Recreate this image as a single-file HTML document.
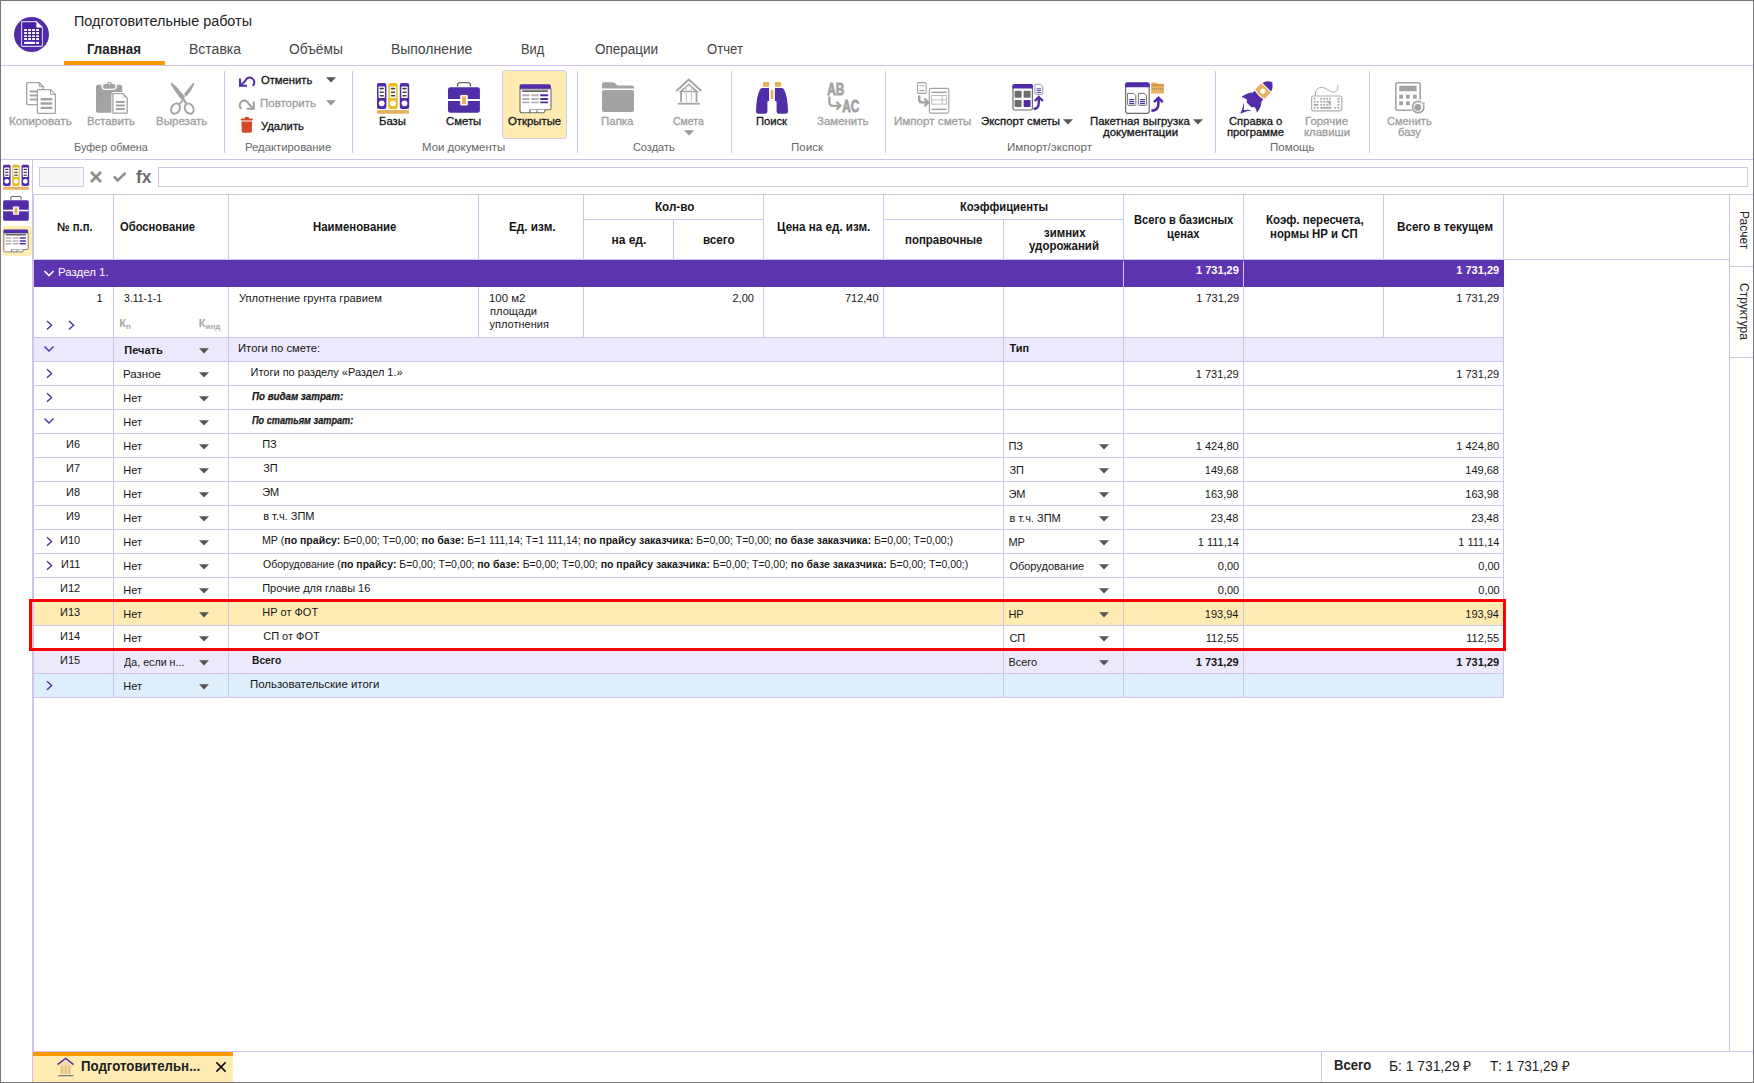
<!DOCTYPE html>
<html><head><meta charset="utf-8"><style>
html,body{margin:0;padding:0;width:1754px;height:1083px;overflow:hidden;background:#fff}
.t{position:absolute;white-space:nowrap;font-family:"Liberation Sans",sans-serif;line-height:1}
svg{overflow:visible}
</style></head><body>
<div style="position:absolute;left:502px;top:70px;width:65px;height:69px;background:#FFECB3;box-sizing:border-box;border:1px solid #D9CCEB;border-radius:3px;"></div><div style="position:absolute;left:2px;top:226px;width:30px;height:30px;background:#FFECB3;border-radius:4px;"></div><div style="position:absolute;left:39px;top:167px;width:45px;height:20px;background:#F8F8F8;box-sizing:border-box;border:1px solid #D1C4E9;"></div><div style="position:absolute;left:158px;top:167px;width:1590px;height:20px;background:#FFFFFF;box-sizing:border-box;border:1px solid #D1C4E9;"></div><div style="position:absolute;left:33px;top:260px;width:1471px;height:27px;background:#5E35B1;"></div><div style="position:absolute;left:33px;top:338px;width:1471px;height:23px;background:#EDE9FC;"></div><div style="position:absolute;left:33px;top:650px;width:1471px;height:23px;background:#EDE9FC;"></div><div style="position:absolute;left:33px;top:674px;width:1471px;height:23px;background:#DDEFFC;"></div><div style="position:absolute;left:33px;top:602px;width:1471px;height:23px;background:#FFECB3;"></div><div style="position:absolute;left:33px;top:1052px;width:200px;height:4px;background:#FF9800;"></div><div style="position:absolute;left:33px;top:1056px;width:200px;height:26px;background:#FFECB3;"></div><div style="position:absolute;left:64px;top:61px;width:101px;height:4px;background:#FF9800;"></div><div class="t" style="left:1750px;top:211px;font-size:12px;color:#222;transform:rotate(90deg);transform-origin:0 0">Расчет</div><div class="t" style="left:1750px;top:283px;font-size:12px;color:#222;transform:rotate(90deg);transform-origin:0 0">Структура</div>
<svg style="position:absolute;left:0;top:0" width="1754" height="1083" shape-rendering="crispEdges"><rect x="1" y="65" width="1752" height="1" fill="#D1C4E9" /><rect x="1" y="159" width="1752" height="1" fill="#D1C4E9" /><rect x="224" y="71" width="1" height="82" fill="#D1C4E9" /><rect x="352" y="71" width="1" height="82" fill="#D1C4E9" /><rect x="577" y="71" width="1" height="82" fill="#D1C4E9" /><rect x="731" y="71" width="1" height="82" fill="#D1C4E9" /><rect x="885" y="71" width="1" height="82" fill="#D1C4E9" /><rect x="1215" y="71" width="1" height="82" fill="#D1C4E9" /><rect x="1369" y="71" width="1" height="82" fill="#D1C4E9" /><rect x="32" y="159" width="1" height="923" fill="#D1C4E9" /><rect x="33" y="194" width="1720" height="1" fill="#D1C4E9" /><rect x="33" y="194" width="1" height="858" fill="#D1C4E9" /><rect x="33" y="259" width="1697" height="1" fill="#D1C4E9" /><rect x="1729" y="194" width="1" height="858" fill="#D1C4E9" /><rect x="1730" y="266" width="23" height="1" fill="#D1C4E9" /><rect x="1730" y="357" width="23" height="1" fill="#D1C4E9" /><rect x="33" y="1051" width="1720" height="1" fill="#D1C4E9" /><rect x="1321" y="1052" width="1" height="30" fill="#D1C4E9" /><rect x="113" y="195" width="1" height="64" fill="#D1C4E9" /><rect x="228" y="195" width="1" height="64" fill="#D1C4E9" /><rect x="478" y="195" width="1" height="64" fill="#D1C4E9" /><rect x="583" y="195" width="1" height="64" fill="#D1C4E9" /><rect x="763" y="195" width="1" height="64" fill="#D1C4E9" /><rect x="883" y="195" width="1" height="64" fill="#D1C4E9" /><rect x="1123" y="195" width="1" height="64" fill="#D1C4E9" /><rect x="1243" y="195" width="1" height="64" fill="#D1C4E9" /><rect x="1383" y="195" width="1" height="64" fill="#D1C4E9" /><rect x="1503" y="195" width="1" height="64" fill="#D1C4E9" /><rect x="673" y="220" width="1" height="39" fill="#D1C4E9" /><rect x="1003" y="220" width="1" height="39" fill="#D1C4E9" /><rect x="584" y="219" width="179" height="1" fill="#D1C4E9" /><rect x="884" y="219" width="239" height="1" fill="#D1C4E9" /><rect x="1123" y="261" width="1" height="26" fill="#D1C4E9" /><rect x="1243" y="261" width="1" height="26" fill="#D1C4E9" /><rect x="113" y="287" width="1" height="50" fill="#D1C4E9" /><rect x="228" y="287" width="1" height="50" fill="#D1C4E9" /><rect x="478" y="287" width="1" height="50" fill="#D1C4E9" /><rect x="583" y="287" width="1" height="50" fill="#D1C4E9" /><rect x="763" y="287" width="1" height="50" fill="#D1C4E9" /><rect x="883" y="287" width="1" height="50" fill="#D1C4E9" /><rect x="1003" y="287" width="1" height="50" fill="#D1C4E9" /><rect x="1123" y="287" width="1" height="50" fill="#D1C4E9" /><rect x="1243" y="287" width="1" height="50" fill="#D1C4E9" /><rect x="1383" y="287" width="1" height="50" fill="#D1C4E9" /><rect x="1503" y="287" width="1" height="50" fill="#D1C4E9" /><rect x="33" y="337" width="1471" height="1" fill="#D1C4E9" /><rect x="113" y="338" width="1" height="23" fill="#D1C4E9" /><rect x="228" y="338" width="1" height="23" fill="#D1C4E9" /><rect x="1003" y="338" width="1" height="23" fill="#D1C4E9" /><rect x="1123" y="338" width="1" height="23" fill="#D1C4E9" /><rect x="1243" y="338" width="1" height="23" fill="#D1C4E9" /><rect x="1503" y="338" width="1" height="23" fill="#D1C4E9" /><rect x="33" y="361" width="1471" height="1" fill="#D1C4E9" /><rect x="113" y="362" width="1" height="23" fill="#D1C4E9" /><rect x="228" y="362" width="1" height="23" fill="#D1C4E9" /><rect x="1003" y="362" width="1" height="23" fill="#D1C4E9" /><rect x="1123" y="362" width="1" height="23" fill="#D1C4E9" /><rect x="1243" y="362" width="1" height="23" fill="#D1C4E9" /><rect x="1503" y="362" width="1" height="23" fill="#D1C4E9" /><rect x="33" y="385" width="1471" height="1" fill="#D1C4E9" /><rect x="113" y="386" width="1" height="23" fill="#D1C4E9" /><rect x="228" y="386" width="1" height="23" fill="#D1C4E9" /><rect x="1003" y="386" width="1" height="23" fill="#D1C4E9" /><rect x="1123" y="386" width="1" height="23" fill="#D1C4E9" /><rect x="1243" y="386" width="1" height="23" fill="#D1C4E9" /><rect x="1503" y="386" width="1" height="23" fill="#D1C4E9" /><rect x="33" y="409" width="1471" height="1" fill="#D1C4E9" /><rect x="113" y="410" width="1" height="23" fill="#D1C4E9" /><rect x="228" y="410" width="1" height="23" fill="#D1C4E9" /><rect x="1003" y="410" width="1" height="23" fill="#D1C4E9" /><rect x="1123" y="410" width="1" height="23" fill="#D1C4E9" /><rect x="1243" y="410" width="1" height="23" fill="#D1C4E9" /><rect x="1503" y="410" width="1" height="23" fill="#D1C4E9" /><rect x="33" y="433" width="1471" height="1" fill="#D1C4E9" /><rect x="113" y="434" width="1" height="23" fill="#D1C4E9" /><rect x="228" y="434" width="1" height="23" fill="#D1C4E9" /><rect x="1003" y="434" width="1" height="23" fill="#D1C4E9" /><rect x="1123" y="434" width="1" height="23" fill="#D1C4E9" /><rect x="1243" y="434" width="1" height="23" fill="#D1C4E9" /><rect x="1503" y="434" width="1" height="23" fill="#D1C4E9" /><rect x="33" y="457" width="1471" height="1" fill="#D1C4E9" /><rect x="113" y="458" width="1" height="23" fill="#D1C4E9" /><rect x="228" y="458" width="1" height="23" fill="#D1C4E9" /><rect x="1003" y="458" width="1" height="23" fill="#D1C4E9" /><rect x="1123" y="458" width="1" height="23" fill="#D1C4E9" /><rect x="1243" y="458" width="1" height="23" fill="#D1C4E9" /><rect x="1503" y="458" width="1" height="23" fill="#D1C4E9" /><rect x="33" y="481" width="1471" height="1" fill="#D1C4E9" /><rect x="113" y="482" width="1" height="23" fill="#D1C4E9" /><rect x="228" y="482" width="1" height="23" fill="#D1C4E9" /><rect x="1003" y="482" width="1" height="23" fill="#D1C4E9" /><rect x="1123" y="482" width="1" height="23" fill="#D1C4E9" /><rect x="1243" y="482" width="1" height="23" fill="#D1C4E9" /><rect x="1503" y="482" width="1" height="23" fill="#D1C4E9" /><rect x="33" y="505" width="1471" height="1" fill="#D1C4E9" /><rect x="113" y="506" width="1" height="23" fill="#D1C4E9" /><rect x="228" y="506" width="1" height="23" fill="#D1C4E9" /><rect x="1003" y="506" width="1" height="23" fill="#D1C4E9" /><rect x="1123" y="506" width="1" height="23" fill="#D1C4E9" /><rect x="1243" y="506" width="1" height="23" fill="#D1C4E9" /><rect x="1503" y="506" width="1" height="23" fill="#D1C4E9" /><rect x="33" y="529" width="1471" height="1" fill="#D1C4E9" /><rect x="113" y="530" width="1" height="23" fill="#D1C4E9" /><rect x="228" y="530" width="1" height="23" fill="#D1C4E9" /><rect x="1003" y="530" width="1" height="23" fill="#D1C4E9" /><rect x="1123" y="530" width="1" height="23" fill="#D1C4E9" /><rect x="1243" y="530" width="1" height="23" fill="#D1C4E9" /><rect x="1503" y="530" width="1" height="23" fill="#D1C4E9" /><rect x="33" y="553" width="1471" height="1" fill="#D1C4E9" /><rect x="113" y="554" width="1" height="23" fill="#D1C4E9" /><rect x="228" y="554" width="1" height="23" fill="#D1C4E9" /><rect x="1003" y="554" width="1" height="23" fill="#D1C4E9" /><rect x="1123" y="554" width="1" height="23" fill="#D1C4E9" /><rect x="1243" y="554" width="1" height="23" fill="#D1C4E9" /><rect x="1503" y="554" width="1" height="23" fill="#D1C4E9" /><rect x="33" y="577" width="1471" height="1" fill="#D1C4E9" /><rect x="113" y="578" width="1" height="23" fill="#D1C4E9" /><rect x="228" y="578" width="1" height="23" fill="#D1C4E9" /><rect x="1003" y="578" width="1" height="23" fill="#D1C4E9" /><rect x="1123" y="578" width="1" height="23" fill="#D1C4E9" /><rect x="1243" y="578" width="1" height="23" fill="#D1C4E9" /><rect x="1503" y="578" width="1" height="23" fill="#D1C4E9" /><rect x="33" y="601" width="1471" height="1" fill="#D1C4E9" /><rect x="113" y="602" width="1" height="23" fill="#D1C4E9" /><rect x="228" y="602" width="1" height="23" fill="#D1C4E9" /><rect x="1003" y="602" width="1" height="23" fill="#D1C4E9" /><rect x="1123" y="602" width="1" height="23" fill="#D1C4E9" /><rect x="1243" y="602" width="1" height="23" fill="#D1C4E9" /><rect x="1503" y="602" width="1" height="23" fill="#D1C4E9" /><rect x="33" y="625" width="1471" height="1" fill="#D1C4E9" /><rect x="113" y="626" width="1" height="23" fill="#D1C4E9" /><rect x="228" y="626" width="1" height="23" fill="#D1C4E9" /><rect x="1003" y="626" width="1" height="23" fill="#D1C4E9" /><rect x="1123" y="626" width="1" height="23" fill="#D1C4E9" /><rect x="1243" y="626" width="1" height="23" fill="#D1C4E9" /><rect x="1503" y="626" width="1" height="23" fill="#D1C4E9" /><rect x="33" y="649" width="1471" height="1" fill="#D1C4E9" /><rect x="113" y="650" width="1" height="23" fill="#D1C4E9" /><rect x="228" y="650" width="1" height="23" fill="#D1C4E9" /><rect x="1003" y="650" width="1" height="23" fill="#D1C4E9" /><rect x="1123" y="650" width="1" height="23" fill="#D1C4E9" /><rect x="1243" y="650" width="1" height="23" fill="#D1C4E9" /><rect x="1503" y="650" width="1" height="23" fill="#D1C4E9" /><rect x="33" y="673" width="1471" height="1" fill="#D1C4E9" /><rect x="113" y="674" width="1" height="23" fill="#D1C4E9" /><rect x="228" y="674" width="1" height="23" fill="#D1C4E9" /><rect x="1003" y="674" width="1" height="23" fill="#D1C4E9" /><rect x="1123" y="674" width="1" height="23" fill="#D1C4E9" /><rect x="1243" y="674" width="1" height="23" fill="#D1C4E9" /><rect x="1503" y="674" width="1" height="23" fill="#D1C4E9" /><rect x="33" y="697" width="1471" height="1" fill="#D1C4E9" /><rect x="0" y="0" width="1754" height="1" fill="#777777" /><rect x="0" y="1082" width="1754" height="1" fill="#777777" /><rect x="0" y="0" width="1" height="1083" fill="#777777" /><rect x="1753" y="0" width="1" height="1083" fill="#777777" /><rect x="29" y="599" width="1477" height="3" fill="#FF0000" /><rect x="29" y="648" width="1477" height="3" fill="#FF0000" /><rect x="29" y="599" width="3" height="52" fill="#FF0000" /><rect x="1503" y="599" width="3" height="52" fill="#FF0000" /></svg>
<svg style="position:absolute;left:43px;top:345px" width="12" height="8" viewBox="0 0 12 8"><path d="M1.5 1.5 L6 6 L10.5 1.5" fill="none" stroke="#512DA8" stroke-width="1.4"/></svg><svg style="position:absolute;left:45px;top:368px" width="9" height="11" viewBox="0 0 9 11"><path d="M2 1.2 L6.6 5.5 L2 9.8" fill="none" stroke="#512DA8" stroke-width="1.4"/></svg><svg style="position:absolute;left:45px;top:392px" width="9" height="11" viewBox="0 0 9 11"><path d="M2 1.2 L6.6 5.5 L2 9.8" fill="none" stroke="#512DA8" stroke-width="1.4"/></svg><svg style="position:absolute;left:43px;top:417px" width="12" height="8" viewBox="0 0 12 8"><path d="M1.5 1.5 L6 6 L10.5 1.5" fill="none" stroke="#512DA8" stroke-width="1.4"/></svg><svg style="position:absolute;left:45px;top:536px" width="9" height="11" viewBox="0 0 9 11"><path d="M2 1.2 L6.6 5.5 L2 9.8" fill="none" stroke="#512DA8" stroke-width="1.4"/></svg><svg style="position:absolute;left:45px;top:560px" width="9" height="11" viewBox="0 0 9 11"><path d="M2 1.2 L6.6 5.5 L2 9.8" fill="none" stroke="#512DA8" stroke-width="1.4"/></svg><svg style="position:absolute;left:45px;top:680px" width="9" height="11" viewBox="0 0 9 11"><path d="M2 1.2 L6.6 5.5 L2 9.8" fill="none" stroke="#512DA8" stroke-width="1.4"/></svg><svg style="position:absolute;left:199px;top:348px" width="10" height="6" viewBox="0 0 10 6"><path d="M0 0.2 H10 L5 5.4 Z" fill="#555"/></svg><svg style="position:absolute;left:199px;top:372px" width="10" height="6" viewBox="0 0 10 6"><path d="M0 0.2 H10 L5 5.4 Z" fill="#555"/></svg><svg style="position:absolute;left:199px;top:396px" width="10" height="6" viewBox="0 0 10 6"><path d="M0 0.2 H10 L5 5.4 Z" fill="#555"/></svg><svg style="position:absolute;left:199px;top:420px" width="10" height="6" viewBox="0 0 10 6"><path d="M0 0.2 H10 L5 5.4 Z" fill="#555"/></svg><svg style="position:absolute;left:199px;top:444px" width="10" height="6" viewBox="0 0 10 6"><path d="M0 0.2 H10 L5 5.4 Z" fill="#555"/></svg><svg style="position:absolute;left:1099px;top:444px" width="10" height="6" viewBox="0 0 10 6"><path d="M0 0.2 H10 L5 5.4 Z" fill="#555"/></svg><svg style="position:absolute;left:199px;top:468px" width="10" height="6" viewBox="0 0 10 6"><path d="M0 0.2 H10 L5 5.4 Z" fill="#555"/></svg><svg style="position:absolute;left:1099px;top:468px" width="10" height="6" viewBox="0 0 10 6"><path d="M0 0.2 H10 L5 5.4 Z" fill="#555"/></svg><svg style="position:absolute;left:199px;top:492px" width="10" height="6" viewBox="0 0 10 6"><path d="M0 0.2 H10 L5 5.4 Z" fill="#555"/></svg><svg style="position:absolute;left:1099px;top:492px" width="10" height="6" viewBox="0 0 10 6"><path d="M0 0.2 H10 L5 5.4 Z" fill="#555"/></svg><svg style="position:absolute;left:199px;top:516px" width="10" height="6" viewBox="0 0 10 6"><path d="M0 0.2 H10 L5 5.4 Z" fill="#555"/></svg><svg style="position:absolute;left:1099px;top:516px" width="10" height="6" viewBox="0 0 10 6"><path d="M0 0.2 H10 L5 5.4 Z" fill="#555"/></svg><svg style="position:absolute;left:199px;top:540px" width="10" height="6" viewBox="0 0 10 6"><path d="M0 0.2 H10 L5 5.4 Z" fill="#555"/></svg><svg style="position:absolute;left:1099px;top:540px" width="10" height="6" viewBox="0 0 10 6"><path d="M0 0.2 H10 L5 5.4 Z" fill="#555"/></svg><svg style="position:absolute;left:199px;top:564px" width="10" height="6" viewBox="0 0 10 6"><path d="M0 0.2 H10 L5 5.4 Z" fill="#555"/></svg><svg style="position:absolute;left:1099px;top:564px" width="10" height="6" viewBox="0 0 10 6"><path d="M0 0.2 H10 L5 5.4 Z" fill="#555"/></svg><svg style="position:absolute;left:199px;top:588px" width="10" height="6" viewBox="0 0 10 6"><path d="M0 0.2 H10 L5 5.4 Z" fill="#555"/></svg><svg style="position:absolute;left:1099px;top:588px" width="10" height="6" viewBox="0 0 10 6"><path d="M0 0.2 H10 L5 5.4 Z" fill="#555"/></svg><svg style="position:absolute;left:199px;top:612px" width="10" height="6" viewBox="0 0 10 6"><path d="M0 0.2 H10 L5 5.4 Z" fill="#555"/></svg><svg style="position:absolute;left:1099px;top:612px" width="10" height="6" viewBox="0 0 10 6"><path d="M0 0.2 H10 L5 5.4 Z" fill="#555"/></svg><svg style="position:absolute;left:199px;top:636px" width="10" height="6" viewBox="0 0 10 6"><path d="M0 0.2 H10 L5 5.4 Z" fill="#555"/></svg><svg style="position:absolute;left:1099px;top:636px" width="10" height="6" viewBox="0 0 10 6"><path d="M0 0.2 H10 L5 5.4 Z" fill="#555"/></svg><svg style="position:absolute;left:199px;top:660px" width="10" height="6" viewBox="0 0 10 6"><path d="M0 0.2 H10 L5 5.4 Z" fill="#555"/></svg><svg style="position:absolute;left:1099px;top:660px" width="10" height="6" viewBox="0 0 10 6"><path d="M0 0.2 H10 L5 5.4 Z" fill="#555"/></svg><svg style="position:absolute;left:199px;top:684px" width="10" height="6" viewBox="0 0 10 6"><path d="M0 0.2 H10 L5 5.4 Z" fill="#555"/></svg><svg style="position:absolute;left:43px;top:269px" width="12" height="9" viewBox="0 0 12 9"><path d="M1.5 2 L6 6.6 L10.5 2" fill="none" stroke="#fff" stroke-width="1.5"/></svg><svg style="position:absolute;left:45px;top:320px" width="9" height="11" viewBox="0 0 9 11"><path d="M2 1 L6.6 5.2 L2 9.4" fill="none" stroke="#512DA8" stroke-width="1.4"/></svg><svg style="position:absolute;left:67px;top:320px" width="9" height="11" viewBox="0 0 9 11"><path d="M2 1 L6.6 5.2 L2 9.4" fill="none" stroke="#512DA8" stroke-width="1.4"/></svg><svg style="position:absolute;left:14px;top:17px" width="35" height="35" viewBox="0 0 35 35"><circle cx="17.5" cy="17.5" r="17.5" fill="#512DA8"/><path d="M7.6 5.2 Q7.6 4.6 8.2 4.6 H22.4 L28.4 10.6 V28.8 Q28.4 29.4 27.8 29.4 H8.2 Q7.6 29.4 7.6 28.8 Z" fill="#4424A0" stroke="#D8CCF0" stroke-width="1.1"/><path d="M22.4 4.6 V10.6 H28.4 Z" fill="#fff"/><rect x="10.1" y="12.1" width="2.9" height="1.8" rx="0.5" fill="#fff"/><rect x="10.1" y="15.1" width="2.9" height="1.8" rx="0.5" fill="#fff"/><rect x="10.1" y="18.2" width="2.9" height="1.8" rx="0.5" fill="#fff"/><rect x="10.1" y="21.1" width="2.9" height="1.8" rx="0.5" fill="#fff"/><rect x="14.1" y="12.1" width="2.9" height="1.8" rx="0.5" fill="#fff"/><rect x="14.1" y="15.1" width="2.9" height="1.8" rx="0.5" fill="#fff"/><rect x="14.1" y="18.2" width="2.9" height="1.8" rx="0.5" fill="#fff"/><rect x="14.1" y="21.1" width="2.9" height="1.8" rx="0.5" fill="#fff"/><rect x="18.1" y="12.1" width="2.9" height="1.8" rx="0.5" fill="#fff"/><rect x="18.1" y="15.1" width="2.9" height="1.8" rx="0.5" fill="#fff"/><rect x="18.1" y="18.2" width="2.9" height="1.8" rx="0.5" fill="#fff"/><rect x="18.1" y="21.1" width="2.9" height="1.8" rx="0.5" fill="#fff"/><rect x="22.1" y="12.1" width="2.9" height="1.8" rx="0.5" fill="#fff"/><rect x="22.1" y="15.1" width="2.9" height="1.8" rx="0.5" fill="#fff"/><rect x="22.1" y="18.2" width="2.9" height="1.8" rx="0.5" fill="#fff"/><rect x="22.1" y="21.1" width="2.9" height="1.8" rx="0.5" fill="#fff"/><rect x="10.1" y="24.8" width="10.9" height="2.1" rx="0.5" fill="#fff"/><rect x="22.1" y="24.8" width="2.9" height="2.1" rx="0.5" fill="#fff"/></svg><svg style="position:absolute;left:26px;top:82px" width="31" height="32" viewBox="0 0 31 32"><path d="M1.7 0.7 H13.3 L17.3 4.7 V21.6 Q17.3 22.6 16.3 22.6 H1.7 Q0.7 22.6 0.7 21.6 V1.7 Q0.7 0.7 1.7 0.7 Z" fill="#fff" stroke="#A3A3A3" stroke-width="1.3"/><path d="M13.3 0.7 V4.7 H17.3" fill="none" stroke="#A3A3A3" stroke-width="1"/><rect x="3.5" y="8.6" width="8" height="2" rx="1" fill="#A3A3A3"/><rect x="3.5" y="12.5" width="8" height="2" rx=".8" fill="#A3A3A3"/><rect x="3.5" y="16.4" width="8" height="2" rx="1" fill="#A3A3A3"/><path d="M12.4 7.6 H24.6 L29.4 12.4 V30.4 Q29.4 31.4 28.4 31.4 H12.4 Q11.4 31.4 11.4 30.4 V8.6 Q11.4 7.6 12.4 7.6 Z" fill="#fff" stroke="#A3A3A3" stroke-width="1.3"/><path d="M24.6 7.6 V12.4 H29.4" fill="none" stroke="#A3A3A3" stroke-width="1"/><rect x="14.5" y="16" width="12" height="2.4" rx="1.2" fill="#A3A3A3"/><rect x="14.5" y="20.3" width="12" height="2.4" rx="1.2" fill="#A3A3A3"/><rect x="14.5" y="24.7" width="12" height="2.4" rx="1.2" fill="#A3A3A3"/></svg><svg style="position:absolute;left:96px;top:81px" width="33" height="33" viewBox="0 0 33 33"><rect x="0" y="3.8" width="26.2" height="28" rx="2.2" fill="#A3A3A3"/><path d="M5.4 3.6 V4.8 Q5.4 9 9.6 9 H16.8 Q21 9 21 4.8 V3.6 Z" fill="#fff"/><rect x="7" y="3" width="12.6" height="4.8" rx="2.4" fill="#A3A3A3"/><ellipse cx="13.3" cy="3" rx="2.6" ry="2.2" fill="#A3A3A3"/><circle cx="13.3" cy="2.6" r="0.9" fill="#fff"/><path d="M16.5 12.2 H26.8 L31.4 16.8 V31.6 Q31.4 32.6 30.4 32.6 H17.5 Q16.5 32.6 16.5 31.6 V13.2 Q16.5 12.2 17.5 12.2 Z" fill="#fff" stroke="#fff" stroke-width="2.2"/><path d="M16.9 12.6 H26.8 L31.2 17 V31.4 Q31.2 32.2 30.4 32.2 H17.7 Q16.9 32.2 16.9 31.4 Z" fill="#fff" stroke="#A3A3A3" stroke-width="1.3"/><path d="M26.8 12.6 V17 H31.2 Z" fill="#A3A3A3" opacity="0.35"/><rect x="19.6" y="20.1" width="9.4" height="2" rx="1" fill="#A3A3A3"/><rect x="19.6" y="23.6" width="9.4" height="2" rx="1" fill="#A3A3A3"/><rect x="19.6" y="27.1" width="9.4" height="2" rx="1" fill="#A3A3A3"/></svg><svg style="position:absolute;left:170px;top:81px" width="25" height="34" viewBox="0 0 25 34"><path d="M1.1 0.9 L5.9 5.3 L14.8 15.6 L13.6 18.4 L12 19.4 Q6 12 1.1 3.9 Z" fill="#A3A3A3"/><path d="M23.6 1.3 L24.1 3.4 Q21.4 10.6 15.9 15.9 L14 12.8 Z" fill="#A3A3A3"/><path d="M13.2 17.6 L16.6 23.2" stroke="#A3A3A3" stroke-width="2.2"/><path d="M12.6 19.6 L9.6 22.8" stroke="#A3A3A3" stroke-width="1.9"/><ellipse cx="5.5" cy="27.6" rx="4.1" ry="5.4" transform="rotate(30 5.5 27.6)" fill="none" stroke="#A3A3A3" stroke-width="2"/><ellipse cx="19.2" cy="27.6" rx="4.1" ry="5.4" transform="rotate(-30 19.2 27.6)" fill="none" stroke="#A3A3A3" stroke-width="2"/></svg><svg style="position:absolute;left:238px;top:74px" width="18" height="14" viewBox="0 0 18 14"><path d="M2.6 11.6 L7.4 6.6 A4.6 4.6 0 1 1 14.6 11.8" fill="none" stroke="#512DA8" stroke-width="2"/><path d="M2 4.6 V11.8 H9" fill="none" stroke="#512DA8" stroke-width="2.1"/></svg><svg style="position:absolute;left:237px;top:97px" width="18" height="14" viewBox="0 0 18 14"><path d="M4.4 11.8 A4.6 4.6 0 1 1 11.6 6.6 L16.4 11.6" fill="none" stroke="#A0A0A0" stroke-width="2"/><path d="M16.8 4.6 V11.8 H9.6" fill="none" stroke="#A0A0A0" stroke-width="2.1"/></svg><svg style="position:absolute;left:240px;top:117px" width="14" height="17" viewBox="0 0 14 17"><rect x="0.8" y="1.4" width="12" height="2" rx="1" fill="#D5472B"/><rect x="4.6" y="0" width="4.4" height="2" rx="0.8" fill="#D5472B"/><path d="M1.4 4.4 H12.2 L11.8 14.2 Q11.7 15.8 10.1 15.8 H3.5 Q1.9 15.8 1.8 14.2 Z" fill="#D5472B"/></svg><svg style="position:absolute;left:326px;top:77px" width="10" height="6" viewBox="0 0 10 6"><path d="M0 0.2 H10 L5 5.4 Z" fill="#555"/></svg><svg style="position:absolute;left:326px;top:100px" width="10" height="6" viewBox="0 0 10 6"><path d="M0 0.2 H10 L5 5.4 Z" fill="#999"/></svg><svg style="position:absolute;left:377px;top:82px" width="32" height="32" viewBox="0 0 32 32"><rect x="0" y="1" width="9.4" height="26" rx="2" fill="#512DA8"/><rect x="1.5" y="4.4" width="6.4" height="11.6" rx="0.8" fill="#fff"/><rect x="2.4" y="5.8" width="4.6" height="1.6" rx="0.8" fill="#474747"/><rect x="2.4" y="9.4" width="4.6" height="1.6" rx="0.8" fill="#474747"/><rect x="2.4" y="12.9" width="4.6" height="1.6" rx="0.8" fill="#474747"/><circle cx="4.7" cy="21.3" r="2.9" fill="#fff"/><rect x="11.3" y="1" width="9.4" height="26" rx="2" fill="#E8BE22"/><rect x="12.8" y="4.4" width="6.4" height="11.6" rx="0.8" fill="#fff"/><rect x="13.700000000000001" y="5.8" width="4.6" height="1.6" rx="0.8" fill="#474747"/><rect x="13.700000000000001" y="9.4" width="4.6" height="1.6" rx="0.8" fill="#474747"/><rect x="13.700000000000001" y="12.9" width="4.6" height="1.6" rx="0.8" fill="#474747"/><circle cx="16.0" cy="21.3" r="2.9" fill="#fff"/><rect x="22.8" y="1" width="9.4" height="26" rx="2" fill="#512DA8"/><rect x="24.3" y="4.4" width="6.4" height="11.6" rx="0.8" fill="#fff"/><rect x="25.2" y="5.8" width="4.6" height="1.6" rx="0.8" fill="#474747"/><rect x="25.2" y="9.4" width="4.6" height="1.6" rx="0.8" fill="#474747"/><rect x="25.2" y="12.9" width="4.6" height="1.6" rx="0.8" fill="#474747"/><circle cx="27.5" cy="21.3" r="2.9" fill="#fff"/><rect x="0" y="28" width="32" height="3.8" rx="1" fill="#E8B060"/></svg><svg style="position:absolute;left:448px;top:82px" width="32" height="31" viewBox="0 0 32 31"><path d="M9.6 4.6 V2.6 Q9.6 0.6 11.6 0.6 H20.4 Q22.4 0.6 22.4 2.6 V4.6" fill="none" stroke="#666" stroke-width="1.3"/><rect x="0" y="5.3" width="31.9" height="25.5" rx="2.3" fill="#512DA8"/><rect x="0" y="17" width="31.9" height="2" fill="#fff"/><rect x="12.2" y="13" width="7.6" height="10.4" rx="1" fill="#fff"/><rect x="14" y="14.4" width="4" height="7.6" fill="#E8B060"/></svg><svg style="position:absolute;left:519px;top:84px" width="33" height="30" viewBox="0 0 33 30"><path d="M1 5 V26.8 Q1 28.8 3 28.8 H11 V25.8 H30.6 Q32 25.8 32 24.4 V5 Z" fill="#fff" stroke="#707070" stroke-width="1.1"/><path d="M0.5 4.8 V2 Q0.5 0.3 2.3 0.3 H29.8 Q31.9 0.3 31.9 2 V4.8 Z" fill="#512DA8"/><rect x="3" y="6.2" width="26.2" height="1.7" rx=".85" fill="#666"/><rect x="3" y="10.3" width="7.8" height="1.9" rx=".9" fill="#B5B5B5"/><rect x="12.1" y="10.3" width="7.8" height="1.9" rx=".9" fill="#B5B5B5"/><rect x="21.1" y="10.3" width="8.1" height="1.9" rx=".9" fill="#512DA8"/><rect x="3" y="14" width="7.8" height="1.9" rx=".9" fill="#B5B5B5"/><rect x="12.1" y="14" width="7.8" height="1.9" rx=".9" fill="#B5B5B5"/><rect x="21.1" y="14" width="8.1" height="1.9" rx=".9" fill="#512DA8"/><rect x="3" y="17.4" width="7.8" height="1.9" rx=".9" fill="#B5B5B5"/><rect x="12.1" y="17.4" width="7.8" height="1.9" rx=".9" fill="#B5B5B5"/><rect x="21.1" y="17.4" width="8.1" height="1.9" rx=".9" fill="#512DA8"/><path d="M11 25.8 V28.8 H25 L26.5 25.8" fill="#fff" stroke="#707070" stroke-width="1.1"/><path d="M18.3 25.8 L17.5 28.8" stroke="#707070" stroke-width="1"/></svg><svg style="position:absolute;left:602px;top:82px" width="32" height="31" viewBox="0 0 32 31"><path d="M0 6.4 V2.4 Q0 0.2 2.2 0.2 H10.4 Q12 0.2 13.4 1.6 L15.4 3.4 H30 Q32 3.4 32 5.2 V6.4 Z" fill="#A3A3A3"/><rect x="0" y="7.9" width="32" height="22.2" rx="2" fill="#A3A3A3"/></svg><svg style="position:absolute;left:675px;top:78px" width="28" height="28" viewBox="0 0 28 28"><path d="M1.3 13 L13.8 1.6 L26.3 13" fill="none" stroke="#A3A3A3" stroke-width="2"/><path d="M5.6 13.6 L13.8 6.4 L22 13.6 Z" fill="none" stroke="#A3A3A3" stroke-width="1.5"/><rect x="5.2" y="14" width="1.8" height="10" fill="#A3A3A3"/><rect x="20.6" y="14" width="1.8" height="10" fill="#A3A3A3"/><rect x="10.6" y="8.5" width="1.3" height="15.5" fill="#CFCFCF"/><rect x="15.8" y="8.5" width="1.3" height="15.5" fill="#CFCFCF"/><rect x="2.8" y="24.8" width="22" height="1.8" fill="#A3A3A3"/></svg><svg style="position:absolute;left:684px;top:130px" width="10" height="6" viewBox="0 0 10 6"><path d="M0 0.2 H10 L5 5.4 Z" fill="#999"/></svg><svg style="position:absolute;left:756px;top:82px" width="32" height="32" viewBox="0 0 32 32"><rect x="7" y="0" width="6.2" height="4.8" fill="#E8B060"/><rect x="18.9" y="0" width="6.2" height="4.8" fill="#E8B060"/><rect x="14.6" y="7.9" width="2.7" height="9.1" fill="#E8B060"/><path d="M6.2 5.9 H13 V18.7 L11.4 19.6 V29.6 Q11.4 31.8 9 31.8 H2.4 Q0 31.8 0 29.4 Q0.2 14 4 7.4 Q4.8 5.9 6.2 5.9 Z" fill="#512DA8"/><path d="M25.8 5.9 H18.9 V18.7 L20.6 19.6 V29.6 Q20.6 31.8 23 31.8 H29.6 Q32 31.8 32 29.4 Q31.8 14 28 7.4 Q27.2 5.9 25.8 5.9 Z" fill="#512DA8"/></svg><svg style="position:absolute;left:827px;top:82px" width="33" height="32" viewBox="0 0 33 32"><text x="0.2" y="13" style="font-family:Liberation Sans;font-weight:700;font-size:16.4px" fill="#A3A3A3" stroke="#A3A3A3" stroke-width="0.9" textLength="17" lengthAdjust="spacingAndGlyphs">AB</text><text x="15.2" y="30" style="font-family:Liberation Sans;font-weight:700;font-size:16.4px" fill="#A3A3A3" stroke="#A3A3A3" stroke-width="0.9" textLength="17" lengthAdjust="spacingAndGlyphs">AC</text><path d="M2.4 14.6 V20 Q2.4 23.8 6.2 23.8 H13" fill="none" stroke="#A3A3A3" stroke-width="2.3"/><path d="M9.4 19.8 L13.4 23.8 L9.4 27.8" fill="none" stroke="#A3A3A3" stroke-width="2.3"/></svg><svg style="position:absolute;left:917px;top:82px" width="33" height="32" viewBox="0 0 33 32"><rect x="0.6" y="0.6" width="8.6" height="10.8" rx="1.2" fill="#fff" stroke="#A3A3A3" stroke-width="1.1"/><rect x="2.3" y="2.8" width="5.2" height="1.6" fill="#C8C8C8"/><rect x="2.3" y="8" width="5.2" height="1.2" fill="#A3A3A3"/><rect x="12.4" y="6.4" width="19.4" height="24.8" rx="1.8" fill="#fff" stroke="#A3A3A3" stroke-width="1.2"/><rect x="14.6" y="9.6" width="15" height="1.5" fill="#A3A3A3"/><rect x="14.6" y="13.5" width="15" height="8.6" fill="none" stroke="#BDBDBD" stroke-width="1"/><rect x="14.6" y="17.4" width="15" height="1" fill="#BDBDBD"/><rect x="24.6" y="13.5" width="1" height="8.6" fill="#BDBDBD"/><rect x="14.6" y="26.6" width="15" height="1.5" fill="#A3A3A3"/><path d="M2.2 13.6 V17.4 Q2.2 20.4 5.4 20.4 H10.8" fill="none" stroke="#A3A3A3" stroke-width="2.4"/><path d="M7.4 16.6 L11.2 20.4 L7.4 24.2" fill="none" stroke="#A3A3A3" stroke-width="2.4"/></svg><svg style="position:absolute;left:1012px;top:83px" width="34" height="29" viewBox="0 0 34 29"><rect x="1" y="1.6" width="19.4" height="25.4" rx="1.8" fill="#fff" stroke="#6D6D6D" stroke-width="1.2"/><path d="M0.4 5.6 V3 Q0.4 1 2.4 1 H19 Q21 1 21 3 V5.6 Z" fill="#512DA8"/><rect x="2.6" y="7.8" width="7" height="7" rx="1" fill="#6D6D6D"/><rect x="11.6" y="7.8" width="7" height="7" rx="1" fill="#6D6D6D"/><rect x="2.6" y="17" width="7" height="7" rx="1" fill="#6D6D6D"/><rect x="11.6" y="17" width="7" height="7" rx="1" fill="#512DA8"/><path d="M23.6 1.3 H28.4 L30.8 3.7 V10.6 Q30.8 11.3 30.1 11.3 H23.6 Q22.9 11.3 22.9 10.6 V2 Q22.9 1.3 23.6 1.3 Z" fill="#fff" stroke="#8A8A8A" stroke-width="0.9"/><rect x="24.6" y="5.4" width="4.6" height="0.9" fill="#512DA8"/><rect x="24.6" y="7.2" width="4.6" height="0.9" fill="#512DA8"/><rect x="24.6" y="9" width="4.6" height="0.9" fill="#512DA8"/><path d="M21.6 26 Q26.8 26 26.8 19.6 V14.6" fill="none" stroke="#512DA8" stroke-width="2.4"/><path d="M22.8 18 L26.8 14 L30.8 18" fill="none" stroke="#512DA8" stroke-width="2.4"/></svg><svg style="position:absolute;left:1063px;top:119px" width="10" height="6" viewBox="0 0 10 6"><path d="M0 0.2 H10 L5 5.4 Z" fill="#555"/></svg><svg style="position:absolute;left:1125px;top:82px" width="40" height="33" viewBox="0 0 40 33"><rect x="0.6" y="1.4" width="23.6" height="30" rx="2.4" fill="#fff" stroke="#6D6D6D" stroke-width="1.2"/><path d="M0 5.2 V2.6 Q0 0.2 2.4 0.2 H22.4 Q24.8 0.2 24.8 2.6 V5.2 Z" fill="#512DA8"/><path d="M2.6 11.4 H8.6 L10.8 13.6 V22.4 Q10.8 23.4 9.8 23.4 H3.6 Q2.6 23.4 2.6 22.4 Z" fill="#fff" stroke="#707070" stroke-width="1"/><path d="M13.4 11.4 H19.4 L21.6 13.6 V22.4 Q21.6 23.4 20.6 23.4 H14.4 Q13.4 23.4 13.4 22.4 Z" fill="#fff" stroke="#707070" stroke-width="1"/><rect x="4.2" y="17" width="5" height="1.2" fill="#512DA8"/><rect x="4.2" y="19" width="5" height="1.2" fill="#512DA8"/><rect x="4.2" y="21" width="5" height="1.2" fill="#512DA8"/><rect x="15" y="17" width="5" height="1.2" fill="#512DA8"/><rect x="15" y="19" width="5" height="1.2" fill="#512DA8"/><rect x="15" y="21" width="5" height="1.2" fill="#512DA8"/><path d="M26.2 11.6 V1.6 Q26.2 0.4 27.4 0.4 H31 L32.4 1.8 H37.8 Q39 1.8 39 3 V11.6 Z" fill="#E8B060"/><rect x="26.2" y="2.6" width="12.8" height="1" fill="#B98A3C"/><path d="M27 6.8 H38.6" stroke="#6d6d6d" stroke-width="0.8" stroke-dasharray="1 1"/><path d="M26.4 28.6 Q33.4 28.6 33.4 22 V16.4" fill="none" stroke="#512DA8" stroke-width="2.6"/><path d="M29 20.2 L33.4 15.8 L37.8 20.2" fill="none" stroke="#512DA8" stroke-width="2.6"/></svg><svg style="position:absolute;left:1193px;top:119px" width="10" height="6" viewBox="0 0 10 6"><path d="M0 0.2 H10 L5 5.4 Z" fill="#555"/></svg><svg style="position:absolute;left:1238px;top:80px" width="36" height="36" viewBox="-18 -18 36 36"><g transform="rotate(45)"><path d="M0 -22.8 Q5.8 -19 6 -15.2 H-6 Q-5.8 -19 0 -22.8 Z" fill="#512DA8"/><path d="M-6.6 -14.2 H6.6 V-5.6 Q3 -4.6 0 -4.6 Q-3 -4.6 -6.6 -5.6 Z" fill="#E8B060"/><circle cx="0" cy="-9.6" r="2.6" fill="#fff"/><path d="M-6.2 -4.2 Q0 -3 6.2 -4.2 V6.4 L3.4 9.8 H-3.4 L-6.2 6.4 Z" fill="#512DA8"/><path d="M-6.2 -1.6 Q-10 2 -11 9.6 Q-8 7.4 -5.6 7.6 Z" fill="#512DA8"/><path d="M6.2 -1.6 Q10 2 11 9.6 Q8 7.4 5.6 7.6 Z" fill="#512DA8"/><path d="M-6 11.6 Q-2.6 15 0 22.4 Q2.6 15 6 11.6 Q2.4 13.6 0 17.4 Q-2.4 13.6 -6 11.6 Z" fill="#512DA8"/></g></svg><svg style="position:absolute;left:1311px;top:84px" width="32" height="28" viewBox="0 0 32 28"><path d="M4.2 11.6 Q4.2 3.4 10.8 3.4 Q13.6 3.4 16.8 5.8 Q20.2 8.4 23.2 8.2 Q27.4 7.6 26.8 0.8" fill="none" stroke="#A3A3A3" stroke-width="0.9"/><rect x="0.6" y="12" width="30.2" height="14.8" rx="2" fill="#fff" stroke="#B0B0B0" stroke-width="1.2"/><rect x="2.7" y="13.8" width="1.8" height="1.8" fill="#A8A8A8"/><rect x="9.3" y="13.8" width="1.8" height="1.8" fill="#A8A8A8"/><rect x="12.3" y="13.8" width="1.8" height="1.8" fill="#A8A8A8"/><rect x="15.3" y="13.8" width="1.8" height="1.8" fill="#A8A8A8"/><rect x="18.3" y="13.8" width="1.8" height="1.8" fill="#A8A8A8"/><rect x="26.6" y="13.8" width="1.8" height="1.8" fill="#A8A8A8"/><rect x="2.7" y="16.9" width="1.8" height="1.8" fill="#A8A8A8"/><rect x="5.8" y="16.9" width="1.8" height="1.8" fill="#A8A8A8"/><rect x="9.3" y="16.9" width="1.8" height="1.8" fill="#A8A8A8"/><rect x="12.3" y="16.9" width="1.8" height="1.8" fill="#A8A8A8"/><rect x="15.3" y="16.9" width="4.4" height="1.8" fill="#A8A8A8"/><rect x="17.9" y="16.9" width="1.8" height="4.8" fill="#A8A8A8"/><rect x="26.6" y="16.9" width="1.8" height="1.8" fill="#A8A8A8"/><rect x="2.7" y="19.9" width="4.6" height="1.8" fill="#A8A8A8"/><rect x="9.3" y="19.9" width="1.8" height="1.8" fill="#A8A8A8"/><rect x="12.3" y="19.9" width="1.8" height="1.8" fill="#A8A8A8"/><rect x="15.3" y="19.9" width="1.8" height="1.8" fill="#A8A8A8"/><rect x="26.6" y="19.9" width="1.8" height="1.8" fill="#A8A8A8"/><rect x="2.7" y="22.9" width="1.8" height="1.8" fill="#A8A8A8"/><rect x="5.8" y="22.9" width="1.8" height="1.8" fill="#A8A8A8"/><rect x="9.3" y="22.9" width="11" height="1.8" fill="#A8A8A8"/><rect x="23.3" y="22.9" width="1.8" height="1.8" fill="#A8A8A8"/><rect x="26.6" y="22.9" width="1.8" height="1.8" fill="#A8A8A8"/></svg><svg style="position:absolute;left:1395px;top:82px" width="32" height="33" viewBox="0 0 32 33"><rect x="0.8" y="0.8" width="24.4" height="27.4" rx="2.2" fill="#fff" stroke="#A3A3A3" stroke-width="1.6"/><rect x="4.2" y="3.8" width="17.4" height="5.5" rx="0.6" fill="#A3A3A3"/><rect x="4.2" y="12.7" width="3.8" height="4" fill="#A3A3A3"/><rect x="11" y="12.7" width="3.8" height="4" fill="#A3A3A3"/><rect x="17.9" y="12.7" width="3.8" height="4" fill="#A3A3A3"/><rect x="4.2" y="19.3" width="3.8" height="3.8" fill="#A3A3A3"/><rect x="11" y="19.3" width="3.8" height="3.8" fill="#A3A3A3"/><circle cx="23.2" cy="25" r="7.4" fill="#fff"/><circle cx="23.2" cy="25" r="5.7" fill="none" stroke="#A3A3A3" stroke-width="1.7"/><circle cx="22.8" cy="25.4" r="3.4" fill="#A3A3A3"/><path d="M25.6 19.6 L29.6 19.8 L28.4 23.4 Z" fill="#fff"/><path d="M27 20.6 L29.8 20.4 L29.2 23.2 Z" fill="#A3A3A3"/></svg><svg style="position:absolute;left:3px;top:164px" width="26" height="26" viewBox="0 0 32 32"><rect x="0" y="1" width="9.4" height="26" rx="2" fill="#512DA8"/><rect x="1.5" y="4.4" width="6.4" height="11.6" rx="0.8" fill="#fff"/><rect x="2.4" y="5.8" width="4.6" height="1.6" rx="0.8" fill="#474747"/><rect x="2.4" y="9.4" width="4.6" height="1.6" rx="0.8" fill="#474747"/><rect x="2.4" y="12.9" width="4.6" height="1.6" rx="0.8" fill="#474747"/><circle cx="4.7" cy="21.3" r="2.9" fill="#fff"/><rect x="11.3" y="1" width="9.4" height="26" rx="2" fill="#E8BE22"/><rect x="12.8" y="4.4" width="6.4" height="11.6" rx="0.8" fill="#fff"/><rect x="13.700000000000001" y="5.8" width="4.6" height="1.6" rx="0.8" fill="#474747"/><rect x="13.700000000000001" y="9.4" width="4.6" height="1.6" rx="0.8" fill="#474747"/><rect x="13.700000000000001" y="12.9" width="4.6" height="1.6" rx="0.8" fill="#474747"/><circle cx="16.0" cy="21.3" r="2.9" fill="#fff"/><rect x="22.8" y="1" width="9.4" height="26" rx="2" fill="#512DA8"/><rect x="24.3" y="4.4" width="6.4" height="11.6" rx="0.8" fill="#fff"/><rect x="25.2" y="5.8" width="4.6" height="1.6" rx="0.8" fill="#474747"/><rect x="25.2" y="9.4" width="4.6" height="1.6" rx="0.8" fill="#474747"/><rect x="25.2" y="12.9" width="4.6" height="1.6" rx="0.8" fill="#474747"/><circle cx="27.5" cy="21.3" r="2.9" fill="#fff"/><rect x="0" y="28" width="32" height="3.8" rx="1" fill="#E8B060"/></svg><svg style="position:absolute;left:3px;top:196px" width="26" height="25" viewBox="0 0 32 31"><path d="M9.6 4.6 V2.6 Q9.6 0.6 11.6 0.6 H20.4 Q22.4 0.6 22.4 2.6 V4.6" fill="none" stroke="#666" stroke-width="1.3"/><rect x="0" y="5.3" width="31.9" height="25.5" rx="2.3" fill="#512DA8"/><rect x="0" y="17" width="31.9" height="2" fill="#fff"/><rect x="12.2" y="13" width="7.6" height="10.4" rx="1" fill="#fff"/><rect x="14" y="14.4" width="4" height="7.6" fill="#E8B060"/></svg><svg style="position:absolute;left:3px;top:229px" width="26" height="24" viewBox="0 0 33 30"><path d="M1 5 V26.8 Q1 28.8 3 28.8 H11 V25.8 H30.6 Q32 25.8 32 24.4 V5 Z" fill="#fff" stroke="#707070" stroke-width="1.1"/><path d="M0.5 4.8 V2 Q0.5 0.3 2.3 0.3 H29.8 Q31.9 0.3 31.9 2 V4.8 Z" fill="#512DA8"/><rect x="3" y="6.2" width="26.2" height="1.7" rx=".85" fill="#666"/><rect x="3" y="10.3" width="7.8" height="1.9" rx=".9" fill="#B5B5B5"/><rect x="12.1" y="10.3" width="7.8" height="1.9" rx=".9" fill="#B5B5B5"/><rect x="21.1" y="10.3" width="8.1" height="1.9" rx=".9" fill="#512DA8"/><rect x="3" y="14" width="7.8" height="1.9" rx=".9" fill="#B5B5B5"/><rect x="12.1" y="14" width="7.8" height="1.9" rx=".9" fill="#B5B5B5"/><rect x="21.1" y="14" width="8.1" height="1.9" rx=".9" fill="#512DA8"/><rect x="3" y="17.4" width="7.8" height="1.9" rx=".9" fill="#B5B5B5"/><rect x="12.1" y="17.4" width="7.8" height="1.9" rx=".9" fill="#B5B5B5"/><rect x="21.1" y="17.4" width="8.1" height="1.9" rx=".9" fill="#512DA8"/><path d="M11 25.8 V28.8 H25 L26.5 25.8" fill="#fff" stroke="#707070" stroke-width="1.1"/><path d="M18.3 25.8 L17.5 28.8" stroke="#707070" stroke-width="1"/></svg><svg style="position:absolute;left:89px;top:170px" width="14" height="14" viewBox="0 0 14 14"><path d="M2 2 L12 12 M12 2 L2 12" stroke="#8E8E8E" stroke-width="2.7"/></svg><svg style="position:absolute;left:113px;top:172px" width="14" height="11" viewBox="0 0 14 11"><path d="M0.9 4.4 L4.6 8.4 L12.6 0.9" fill="none" stroke="#8E8E8E" stroke-width="2.6"/></svg><svg style="position:absolute;left:56px;top:1057px" width="20" height="20" viewBox="0 0 20 20"><path d="M1.6 7.6 L9.6 1.4 L17.6 7.6" fill="none" stroke="#512DA8" stroke-width="1.4"/><path d="M4.2 8 L9.6 4 L15 8 V17 H4.2 Z" fill="#F0D9A8"/><rect x="5.4" y="9" width="1.2" height="8" fill="#E8B060"/><rect x="9" y="9" width="1.2" height="8" fill="#E8B060"/><rect x="12.6" y="9" width="1.2" height="8" fill="#E8B060"/><rect x="2.4" y="18" width="15" height="1.3" fill="#777"/></svg><svg style="position:absolute;left:215px;top:1061px" width="12" height="12" viewBox="0 0 12 12"><path d="M1.4 1.4 L10.6 10.6 M10.6 1.4 L1.4 10.6" stroke="#111" stroke-width="1.6"/></svg>
<div class="t" style="left:73.57px;top:14px;font-size:14px;font-weight:400;color:#222;transform:scaleX(1.0267);transform-origin:0 0;">Подготовительные работы</div><div class="t" style="left:87.35px;top:42px;font-size:14px;font-weight:700;color:#222;transform:scaleX(0.9473);transform-origin:0 0;">Главная</div><div class="t" style="left:189.00px;top:42px;font-size:14px;font-weight:400;color:#444444;">Вставка</div><div class="t" style="left:289.20px;top:42px;font-size:14px;font-weight:400;color:#444444;transform:scaleX(0.9852);transform-origin:0 0;">Объёмы</div><div class="t" style="left:390.90px;top:42px;font-size:14px;font-weight:400;color:#444444;">Выполнение</div><div class="t" style="left:520.98px;top:42px;font-size:14px;font-weight:400;color:#444444;transform:scaleX(0.9200);transform-origin:0 0;">Вид</div><div class="t" style="left:595.30px;top:42px;font-size:14px;font-weight:400;color:#444444;transform:scaleX(0.9631);transform-origin:0 0;">Операции</div><div class="t" style="left:706.80px;top:42px;font-size:14px;font-weight:400;color:#444444;transform:scaleX(0.9385);transform-origin:0 0;">Отчет</div><div class="t" style="left:8.64px;top:116px;font-size:11px;font-weight:400;color:#9E9E9E;transform:scaleX(1.0586);transform-origin:0 0;-webkit-text-stroke:0.3px #9E9E9E;">Копировать</div><div class="t" style="left:86.77px;top:116px;font-size:11px;font-weight:400;color:#9E9E9E;transform:scaleX(1.0261);transform-origin:0 0;-webkit-text-stroke:0.3px #9E9E9E;">Вставить</div><div class="t" style="left:156.25px;top:116px;font-size:11px;font-weight:400;color:#9E9E9E;transform:scaleX(1.0500);transform-origin:0 0;-webkit-text-stroke:0.3px #9E9E9E;">Вырезать</div><div class="t" style="left:261.30px;top:75px;font-size:11px;font-weight:400;color:#161616;transform:scaleX(1.0200);transform-origin:0 0;-webkit-text-stroke:0.3px #161616;">Отменить</div><div class="t" style="left:260.26px;top:98px;font-size:11px;font-weight:400;color:#9E9E9E;transform:scaleX(1.0434);transform-origin:0 0;-webkit-text-stroke:0.3px #9E9E9E;">Повторить</div><div class="t" style="left:261.30px;top:121px;font-size:11px;font-weight:400;color:#161616;transform:scaleX(1.0214);transform-origin:0 0;-webkit-text-stroke:0.3px #161616;">Удалить</div><div class="t" style="left:379.00px;top:116px;font-size:11px;font-weight:400;color:#161616;transform:scaleX(1.0269);transform-origin:0 0;-webkit-text-stroke:0.3px #161616;">Базы</div><div class="t" style="left:446.00px;top:116px;font-size:11px;font-weight:400;color:#161616;transform:scaleX(1.0294);transform-origin:0 0;-webkit-text-stroke:0.3px #161616;">Сметы</div><div class="t" style="left:507.70px;top:116px;font-size:11px;font-weight:400;color:#161616;transform:scaleX(1.0327);transform-origin:0 0;-webkit-text-stroke:0.3px #161616;">Открытые</div><div class="t" style="left:600.96px;top:116px;font-size:11px;font-weight:400;color:#9E9E9E;transform:scaleX(1.0433);transform-origin:0 0;-webkit-text-stroke:0.3px #9E9E9E;">Папка</div><div class="t" style="left:672.80px;top:116px;font-size:11px;font-weight:400;color:#9E9E9E;transform:scaleX(0.9576);transform-origin:0 0;-webkit-text-stroke:0.3px #9E9E9E;">Смета</div><div class="t" style="left:755.80px;top:116px;font-size:11px;font-weight:400;color:#161616;transform:scaleX(1.0161);transform-origin:0 0;-webkit-text-stroke:0.3px #161616;">Поиск</div><div class="t" style="left:817.00px;top:116px;font-size:11px;font-weight:400;color:#9E9E9E;transform:scaleX(1.0408);transform-origin:0 0;-webkit-text-stroke:0.3px #9E9E9E;">Заменить</div><div class="t" style="left:893.94px;top:116px;font-size:11px;font-weight:400;color:#9E9E9E;transform:scaleX(1.0556);transform-origin:0 0;-webkit-text-stroke:0.3px #9E9E9E;">Импорт сметы</div><div class="t" style="left:980.60px;top:116px;font-size:11px;font-weight:400;color:#161616;transform:scaleX(1.0382);transform-origin:0 0;-webkit-text-stroke:0.3px #161616;">Экспорт сметы</div><div class="t" style="left:1089.70px;top:116px;font-size:11px;font-weight:400;color:#161616;transform:scaleX(1.0340);transform-origin:0 0;-webkit-text-stroke:0.3px #161616;">Пакетная выгрузка</div><div class="t" style="left:1102.60px;top:127px;font-size:11px;font-weight:400;color:#161616;transform:scaleX(1.0403);transform-origin:0 0;-webkit-text-stroke:0.3px #161616;">документации</div><div class="t" style="left:1229.00px;top:116px;font-size:11px;font-weight:400;color:#161616;transform:scaleX(1.0192);transform-origin:0 0;-webkit-text-stroke:0.3px #161616;">Справка о</div><div class="t" style="left:1226.70px;top:127px;font-size:11px;font-weight:400;color:#161616;transform:scaleX(1.0232);transform-origin:0 0;-webkit-text-stroke:0.3px #161616;">программе</div><div class="t" style="left:1304.76px;top:116px;font-size:11px;font-weight:400;color:#9E9E9E;transform:scaleX(1.0425);transform-origin:0 0;-webkit-text-stroke:0.3px #9E9E9E;">Горячие</div><div class="t" style="left:1303.70px;top:127px;font-size:11px;font-weight:400;color:#9E9E9E;transform:scaleX(1.0364);transform-origin:0 0;-webkit-text-stroke:0.3px #9E9E9E;">клавиши</div><div class="t" style="left:1387.00px;top:116px;font-size:11px;font-weight:400;color:#9E9E9E;-webkit-text-stroke:0.3px #9E9E9E;">Сменить</div><div class="t" style="left:1398.00px;top:127px;font-size:11px;font-weight:400;color:#9E9E9E;transform:scaleX(1.0174);transform-origin:0 0;-webkit-text-stroke:0.3px #9E9E9E;">базу</div><div class="t" style="left:74.41px;top:142px;font-size:11px;font-weight:400;color:#666666;transform:scaleX(0.9865);transform-origin:0 0;">Буфер обмена</div><div class="t" style="left:244.57px;top:142px;font-size:11px;font-weight:400;color:#666666;transform:scaleX(1.0289);transform-origin:0 0;">Редактирование</div><div class="t" style="left:422.36px;top:142px;font-size:11px;font-weight:400;color:#666666;transform:scaleX(1.0380);transform-origin:0 0;">Мои документы</div><div class="t" style="left:632.90px;top:142px;font-size:11px;font-weight:400;color:#666666;">Создать</div><div class="t" style="left:791.45px;top:142px;font-size:11px;font-weight:400;color:#666666;transform:scaleX(1.0500);transform-origin:0 0;">Поиск</div><div class="t" style="left:1006.95px;top:142px;font-size:11px;font-weight:400;color:#666666;transform:scaleX(1.0550);transform-origin:0 0;">Импорт/экспорт</div><div class="t" style="left:1269.55px;top:142px;font-size:11px;font-weight:400;color:#666666;transform:scaleX(1.0488);transform-origin:0 0;">Помощь</div><div class="t" style="left:56.60px;top:221px;font-size:12px;font-weight:700;color:#161616;transform:scaleX(0.9432);transform-origin:0 0;">№ п.п.</div><div class="t" style="left:120.30px;top:221px;font-size:12px;font-weight:700;color:#161616;transform:scaleX(0.9338);transform-origin:0 0;">Обоснование</div><div class="t" style="left:312.50px;top:221px;font-size:12px;font-weight:700;color:#161616;transform:scaleX(0.9477);transform-origin:0 0;">Наименование</div><div class="t" style="left:508.60px;top:221px;font-size:12px;font-weight:700;color:#161616;transform:scaleX(0.9809);transform-origin:0 0;">Ед. изм.</div><div class="t" style="left:654.70px;top:201px;font-size:12px;font-weight:700;color:#161616;transform:scaleX(0.9725);transform-origin:0 0;">Кол-во</div><div class="t" style="left:611.41px;top:234px;font-size:12px;font-weight:700;color:#161616;">на ед.</div><div class="t" style="left:703.03px;top:234px;font-size:12px;font-weight:700;color:#161616;transform:scaleX(0.9710);transform-origin:0 0;">всего</div><div class="t" style="left:777.20px;top:221px;font-size:12px;font-weight:700;color:#161616;transform:scaleX(0.9688);transform-origin:0 0;">Цена на ед. изм.</div><div class="t" style="left:960.20px;top:201px;font-size:12px;font-weight:700;color:#161616;transform:scaleX(0.9340);transform-origin:0 0;">Коэффициенты</div><div class="t" style="left:905.05px;top:234px;font-size:12px;font-weight:700;color:#161616;transform:scaleX(0.9537);transform-origin:0 0;">поправочные</div><div class="t" style="left:1043.80px;top:227px;font-size:12px;font-weight:700;color:#161616;transform:scaleX(0.9535);transform-origin:0 0;">зимних</div><div class="t" style="left:1029.20px;top:240px;font-size:12px;font-weight:700;color:#161616;transform:scaleX(0.9562);transform-origin:0 0;">удорожаний</div><div class="t" style="left:1134.40px;top:214px;font-size:12px;font-weight:700;color:#161616;transform:scaleX(0.9308);transform-origin:0 0;">Всего в базисных</div><div class="t" style="left:1167.06px;top:228px;font-size:12px;font-weight:700;color:#161616;transform:scaleX(0.9353);transform-origin:0 0;">ценах</div><div class="t" style="left:1265.50px;top:214px;font-size:12px;font-weight:700;color:#161616;transform:scaleX(0.9594);transform-origin:0 0;">Коэф. пересчета,</div><div class="t" style="left:1269.85px;top:228px;font-size:12px;font-weight:700;color:#161616;transform:scaleX(0.9516);transform-origin:0 0;">нормы НР и СП</div><div class="t" style="left:1396.60px;top:221px;font-size:12px;font-weight:700;color:#161616;transform:scaleX(0.9704);transform-origin:0 0;">Всего в текущем</div><div class="t" style="left:58.16px;top:267px;font-size:11px;font-weight:400;color:#fff;transform:scaleX(1.0426);transform-origin:0 0;">Раздел 1.</div><div class="t" style="left:1196.00px;top:265px;font-size:11px;font-weight:700;color:#fff;">1 731,29</div><div class="t" style="left:1456.30px;top:265px;font-size:11px;font-weight:700;color:#fff;">1 731,29</div><div class="t" style="left:96.40px;top:293px;font-size:11px;font-weight:400;color:#161616;">1</div><div class="t" style="left:124.30px;top:293px;font-size:11px;font-weight:400;color:#161616;transform:scaleX(0.9500);transform-origin:0 0;">3.11-1-1</div><div class="t" style="left:239.30px;top:293px;font-size:11px;font-weight:400;color:#161616;transform:scaleX(1.0121);transform-origin:0 0;">Уплотнение грунта гравием</div><div class="t" style="left:488.56px;top:293px;font-size:11px;font-weight:400;color:#161616;transform:scaleX(1.0353);transform-origin:0 0;">100 м2</div><div class="t" style="left:489.60px;top:306px;font-size:11px;font-weight:400;color:#161616;transform:scaleX(1.0109);transform-origin:0 0;">площади</div><div class="t" style="left:489.60px;top:319px;font-size:11px;font-weight:400;color:#161616;">уплотнения</div><div class="t" style="left:732.50px;top:293px;font-size:11px;font-weight:400;color:#161616;">2,00</div><div class="t" style="left:844.90px;top:293px;font-size:11px;font-weight:400;color:#161616;">712,40</div><div class="t" style="left:1196.30px;top:293px;font-size:11px;font-weight:400;color:#161616;">1 731,29</div><div class="t" style="left:1456.30px;top:293px;font-size:11px;font-weight:400;color:#161616;">1 731,29</div><div class="t" style="left:119.20px;top:318px;font-size:11px;font-weight:700;color:#A6A6A6;">К<span style="font-size:8px;vertical-align:-2px">п</span></div><div class="t" style="left:198.80px;top:318px;font-size:11px;font-weight:700;color:#A6A6A6;">К<span style="font-size:8px;vertical-align:-2px">инд</span></div><div class="t" style="left:124.30px;top:345px;font-size:11px;font-weight:700;color:#161616;">Печать</div><div class="t" style="left:238.28px;top:343px;font-size:11px;font-weight:400;color:#161616;transform:scaleX(1.0241);transform-origin:0 0;">Итоги по смете:</div><div class="t" style="left:1009.40px;top:343px;font-size:11px;font-weight:700;color:#161616;">Тип</div><div class="t" style="left:123.25px;top:369px;font-size:11px;font-weight:400;color:#161616;transform:scaleX(1.0457);transform-origin:0 0;">Разное</div><div class="t" style="left:250.50px;top:367px;font-size:11px;font-weight:400;color:#161616;">Итоги по разделу «Раздел 1.»</div><div class="t" style="left:1195.80px;top:369px;font-size:11px;font-weight:400;color:#161616;">1 731,29</div><div class="t" style="left:1456.30px;top:369px;font-size:11px;font-weight:400;color:#161616;">1 731,29</div><div class="t" style="left:123.30px;top:393px;font-size:11px;font-weight:400;color:#161616;">Нет</div><div class="t" style="left:251.50px;top:391px;font-size:11px;font-weight:400;color:#161616;transform:scaleX(0.8854);transform-origin:0 0;-webkit-text-stroke:0.25px #212121;"><b><i>По видам затрат:</i></b></div><div class="t" style="left:123.30px;top:417px;font-size:11px;font-weight:400;color:#161616;">Нет</div><div class="t" style="left:251.50px;top:415px;font-size:11px;font-weight:400;color:#161616;transform:scaleX(0.8339);transform-origin:0 0;-webkit-text-stroke:0.25px #212121;"><b><i>По статьям затрат:</i></b></div><div class="t" style="left:66.00px;top:439px;font-size:11px;font-weight:400;color:#161616;">И6</div><div class="t" style="left:123.30px;top:441px;font-size:11px;font-weight:400;color:#161616;">Нет</div><div class="t" style="left:262.20px;top:439px;font-size:11px;font-weight:400;color:#161616;">ПЗ</div><div class="t" style="left:1008.40px;top:441px;font-size:11px;font-weight:400;color:#161616;">ПЗ</div><div class="t" style="left:1195.80px;top:441px;font-size:11px;font-weight:400;color:#161616;">1 424,80</div><div class="t" style="left:1456.30px;top:441px;font-size:11px;font-weight:400;color:#161616;">1 424,80</div><div class="t" style="left:66.00px;top:463px;font-size:11px;font-weight:400;color:#161616;">И7</div><div class="t" style="left:123.30px;top:465px;font-size:11px;font-weight:400;color:#161616;">Нет</div><div class="t" style="left:263.20px;top:463px;font-size:11px;font-weight:400;color:#161616;">ЗП</div><div class="t" style="left:1009.40px;top:465px;font-size:11px;font-weight:400;color:#161616;">ЗП</div><div class="t" style="left:1204.80px;top:465px;font-size:11px;font-weight:400;color:#161616;">149,68</div><div class="t" style="left:1465.30px;top:465px;font-size:11px;font-weight:400;color:#161616;">149,68</div><div class="t" style="left:66.00px;top:487px;font-size:11px;font-weight:400;color:#161616;">И8</div><div class="t" style="left:123.30px;top:489px;font-size:11px;font-weight:400;color:#161616;">Нет</div><div class="t" style="left:262.20px;top:487px;font-size:11px;font-weight:400;color:#161616;">ЭМ</div><div class="t" style="left:1008.40px;top:489px;font-size:11px;font-weight:400;color:#161616;">ЭМ</div><div class="t" style="left:1204.80px;top:489px;font-size:11px;font-weight:400;color:#161616;">163,98</div><div class="t" style="left:1465.30px;top:489px;font-size:11px;font-weight:400;color:#161616;">163,98</div><div class="t" style="left:66.00px;top:511px;font-size:11px;font-weight:400;color:#161616;">И9</div><div class="t" style="left:123.30px;top:513px;font-size:11px;font-weight:400;color:#161616;">Нет</div><div class="t" style="left:263.20px;top:511px;font-size:11px;font-weight:400;color:#161616;">в т.ч. ЗПМ</div><div class="t" style="left:1009.40px;top:513px;font-size:11px;font-weight:400;color:#161616;">в т.ч. ЗПМ</div><div class="t" style="left:1210.80px;top:513px;font-size:11px;font-weight:400;color:#161616;">23,48</div><div class="t" style="left:1471.30px;top:513px;font-size:11px;font-weight:400;color:#161616;">23,48</div><div class="t" style="left:60.00px;top:535px;font-size:11px;font-weight:400;color:#161616;">И10</div><div class="t" style="left:123.30px;top:537px;font-size:11px;font-weight:400;color:#161616;">Нет</div><div class="t" style="left:262.24px;top:535px;font-size:11px;font-weight:400;color:#161616;transform:scaleX(0.9582);transform-origin:0 0;">МР (<b>по прайсу:</b> Б=0,00; Т=0,00; <b>по базе:</b> Б=1 111,14; Т=1 111,14; <b>по прайсу заказчика:</b> Б=0,00; Т=0,00; <b>по базе заказчика:</b> Б=0,00; Т=0,00;)</div><div class="t" style="left:1008.40px;top:537px;font-size:11px;font-weight:400;color:#161616;">МР</div><div class="t" style="left:1197.80px;top:537px;font-size:11px;font-weight:400;color:#161616;">1 111,14</div><div class="t" style="left:1458.30px;top:537px;font-size:11px;font-weight:400;color:#161616;">1 111,14</div><div class="t" style="left:61.00px;top:559px;font-size:11px;font-weight:400;color:#161616;">И11</div><div class="t" style="left:123.30px;top:561px;font-size:11px;font-weight:400;color:#161616;">Нет</div><div class="t" style="left:263.20px;top:559px;font-size:11px;font-weight:400;color:#161616;transform:scaleX(0.9530);transform-origin:0 0;">Оборудование (<b>по прайсу:</b> Б=0,00; Т=0,00; <b>по базе:</b> Б=0,00; Т=0,00; <b>по прайсу заказчика:</b> Б=0,00; Т=0,00; <b>по базе заказчика:</b> Б=0,00; Т=0,00;)</div><div class="t" style="left:1009.40px;top:561px;font-size:11px;font-weight:400;color:#161616;">Оборудование</div><div class="t" style="left:1217.80px;top:561px;font-size:11px;font-weight:400;color:#161616;">0,00</div><div class="t" style="left:1478.30px;top:561px;font-size:11px;font-weight:400;color:#161616;">0,00</div><div class="t" style="left:60.00px;top:583px;font-size:11px;font-weight:400;color:#161616;">И12</div><div class="t" style="left:123.30px;top:585px;font-size:11px;font-weight:400;color:#161616;">Нет</div><div class="t" style="left:262.20px;top:583px;font-size:11px;font-weight:400;color:#161616;">Прочие для главы 16</div><div class="t" style="left:1217.80px;top:585px;font-size:11px;font-weight:400;color:#161616;">0,00</div><div class="t" style="left:1478.30px;top:585px;font-size:11px;font-weight:400;color:#161616;">0,00</div><div class="t" style="left:60.00px;top:607px;font-size:11px;font-weight:400;color:#161616;">И13</div><div class="t" style="left:123.30px;top:609px;font-size:11px;font-weight:400;color:#161616;">Нет</div><div class="t" style="left:262.20px;top:607px;font-size:11px;font-weight:400;color:#161616;">НР от ФОТ</div><div class="t" style="left:1008.40px;top:609px;font-size:11px;font-weight:400;color:#161616;">НР</div><div class="t" style="left:1204.80px;top:609px;font-size:11px;font-weight:400;color:#161616;">193,94</div><div class="t" style="left:1465.30px;top:609px;font-size:11px;font-weight:400;color:#161616;">193,94</div><div class="t" style="left:60.00px;top:631px;font-size:11px;font-weight:400;color:#161616;">И14</div><div class="t" style="left:123.30px;top:633px;font-size:11px;font-weight:400;color:#161616;">Нет</div><div class="t" style="left:263.20px;top:631px;font-size:11px;font-weight:400;color:#161616;">СП от ФОТ</div><div class="t" style="left:1009.40px;top:633px;font-size:11px;font-weight:400;color:#161616;">СП</div><div class="t" style="left:1205.80px;top:633px;font-size:11px;font-weight:400;color:#161616;">112,55</div><div class="t" style="left:1466.30px;top:633px;font-size:11px;font-weight:400;color:#161616;">112,55</div><div class="t" style="left:60.00px;top:655px;font-size:11px;font-weight:400;color:#161616;">И15</div><div class="t" style="left:124.30px;top:657px;font-size:11px;font-weight:400;color:#161616;transform:scaleX(0.9721);transform-origin:0 0;">Да, если н...</div><div class="t" style="left:251.50px;top:655px;font-size:11px;font-weight:700;color:#161616;transform:scaleX(0.9323);transform-origin:0 0;">Всего</div><div class="t" style="left:1008.40px;top:657px;font-size:11px;font-weight:400;color:#161616;">Всего</div><div class="t" style="left:1195.80px;top:657px;font-size:11px;font-weight:400;color:#161616;"><b>1 731,29</b></div><div class="t" style="left:1456.30px;top:657px;font-size:11px;font-weight:400;color:#161616;"><b>1 731,29</b></div><div class="t" style="left:123.30px;top:681px;font-size:11px;font-weight:400;color:#161616;">Нет</div><div class="t" style="left:250.46px;top:679px;font-size:11px;font-weight:400;color:#161616;transform:scaleX(1.0407);transform-origin:0 0;">Пользовательские итоги</div><div class="t" style="left:80.65px;top:1059px;font-size:14px;font-weight:700;color:#222;transform:scaleX(0.9468);transform-origin:0 0;">Подготовительн...</div><div class="t" style="left:1333.57px;top:1058px;font-size:14px;font-weight:700;color:#222;transform:scaleX(0.9308);transform-origin:0 0;">Всего</div><div class="t" style="left:1389.21px;top:1059px;font-size:14px;font-weight:400;color:#222;transform:scaleX(0.9878);transform-origin:0 0;">Б: 1 731,29 ₽</div><div class="t" style="left:1490.20px;top:1059px;font-size:14px;font-weight:400;color:#222;transform:scaleX(0.9602);transform-origin:0 0;">Т: 1 731,29 ₽</div><div class="t" style="left:136.20px;top:167px;font-size:19px;font-weight:700;color:#6E6E6E;transform:scaleX(0.9176);transform-origin:0 0;">fx</div>
</body></html>
